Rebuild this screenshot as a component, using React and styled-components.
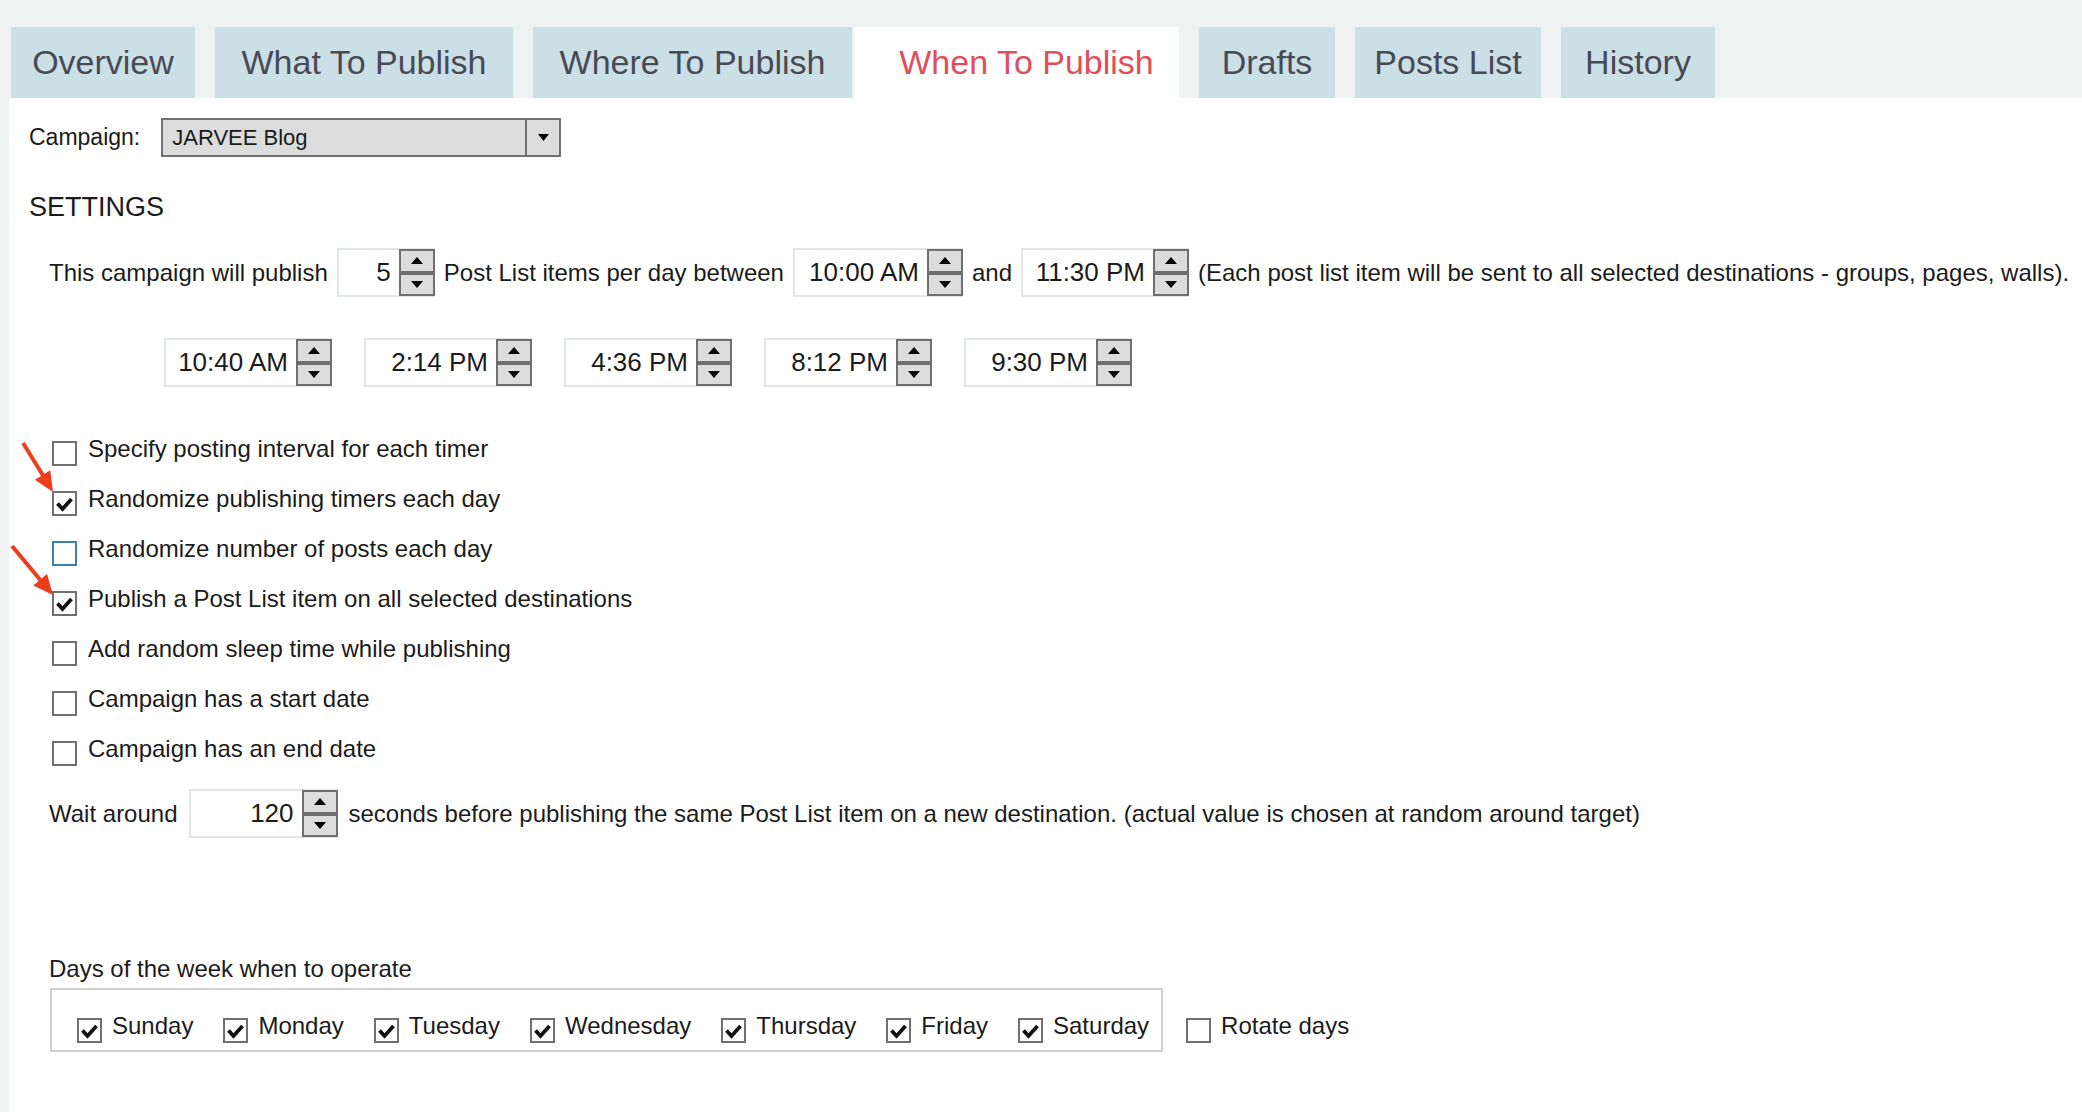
import React from "react";
import styled, { createGlobalStyle } from "styled-components";

const GlobalStyle = createGlobalStyle`
  html, body {
    margin: 0;
    padding: 0;
    background: #ffffff;
  }
  body {
    font-family: "Liberation Sans", Arial, sans-serif;
    color: #1b1b1b;
  }
`;

const Page = styled.div`
  position: relative;
  width: 2082px;
  min-height: 1112px;
  background: #ffffff;
  display: flex;
  flex-direction: column;
`;

const TabStrip = styled.div`
  display: flex;
  gap: 20px;
  height: 98px;
  box-sizing: border-box;
  padding: 27px 0 0 11px;
  background: #eef2f1;
`;

const Tab = styled.div`
  box-sizing: border-box;
  width: ${(p) => p.$w}px;
  height: 71px;
  display: flex;
  align-items: center;
  justify-content: center;
  font-size: 34px;
  color: ${(p) => (p.$active ? "#e24d5a" : "#4a4a55")};
  background: ${(p) => (p.$active ? "#ffffff" : "#cbdfe6")};
  margin-left: ${(p) => (p.$active ? "-18px" : "0")};
  padding-left: ${(p) => (p.$active ? "20px" : "0")};
`;

const Body = styled.div`
  flex: 1;
  border-left: 9px solid #eef2f1;
  padding: 20px 0 0 20px;
  display: flex;
  flex-direction: column;
`;

const CampaignRow = styled.div`
  display: flex;
  align-items: center;
  gap: 21px;
  font-size: 23px;
`;

const Combo = styled.div`
  box-sizing: border-box;
  width: 400px;
  height: 39px;
  display: flex;
  border: 2px solid #707070;
  background: #dcdcdc;
`;

const ComboText = styled.div`
  flex: 1;
  display: flex;
  align-items: center;
  padding-left: 9px;
  font-size: 22px;
  color: #1b1b1b;
`;

const ComboButton = styled.div`
  width: 32px;
  border-left: 2px solid #707070;
  display: flex;
  align-items: center;
  justify-content: center;
`;

const SectionTitle = styled.div`
  margin-top: 32px;
  font-size: 27px;
  line-height: 36px;
  color: #1b1b1b;
`;

const InlineRow = styled.div`
  display: flex;
  align-items: center;
  gap: ${(p) => p.$gap || 10}px;
  margin-top: ${(p) => p.$top}px;
  padding-left: ${(p) => p.$indent}px;
  font-size: 24px;
  white-space: nowrap;
`;

const SpinBox = styled.div`
  box-sizing: border-box;
  width: ${(p) => p.$w}px;
  height: 49px;
  display: flex;
  border: 2px solid #e1e6ea;
  border-right: none;
  background: #ffffff;
`;

const SpinValue = styled.div`
  flex: 1;
  display: flex;
  align-items: center;
  justify-content: flex-end;
  padding-right: 8px;
  font-size: 26px;
  color: #1b1b1b;
`;

const SpinButtons = styled.div`
  width: 36px;
  display: flex;
  flex-direction: column;
  margin-top: -1px;
  margin-bottom: -1px;
`;

const SpinButton = styled.div`
  flex: 1;
  box-sizing: border-box;
  border: 2px solid #6f6f6f;
  background: #dcdcdc;
  display: flex;
  align-items: center;
  justify-content: center;
`;

const CheckList = styled.div`
  margin-top: 37px;
  padding-left: 23px;
  display: flex;
  flex-direction: column;
`;

const CheckRow = styled.div`
  height: ${(p) => p.$h || 50}px;
  display: flex;
  align-items: center;
  gap: ${(p) => p.$gap || 11}px;
  font-size: 24px;
  white-space: nowrap;
`;

const Box = styled.div`
  box-sizing: border-box;
  flex: none;
  width: 25px;
  height: 25px;
  margin-top: 8px;
  border: 2px solid ${(p) => (p.$focus ? "#3d7fb3" : "#707070")};
  background: #ffffff;
  display: flex;
  align-items: center;
  justify-content: center;
`;

const DaysLabel = styled.div`
  margin-top: 117px;
  padding-left: 20px;
  font-size: 24px;
  line-height: 28px;
`;

const DaysRow = styled.div`
  margin-top: 5px;
  padding-left: 21px;
  display: flex;
  align-items: flex-end;
`;

const DaysGroup = styled.div`
  display: flex;
  gap: 30px;
  border: 2px solid #d0d0d0;
  padding: 18px 12px 6px 25px;
`;

const RotateWrap = styled.div`
  margin-left: 23px;
  padding-bottom: 8px;
`;

const Annotations = styled.svg`
  position: absolute;
  left: 0;
  top: 430px;
  width: 70px;
  height: 180px;
  pointer-events: none;
`;

const Arrow = ({ dir }) => (
  <svg width="12" height="7" viewBox="0 0 12 7">
    {dir === "up" ? (
      <polygon points="0,7 6,0 12,7" fill="#000" />
    ) : (
      <polygon points="0,0 12,0 6,7" fill="#000" />
    )}
  </svg>
);

const Spin = ({ value, w }) => (
  <SpinBox $w={w}>
    <SpinValue>{value}</SpinValue>
    <SpinButtons>
      <SpinButton>
        <Arrow dir="up" />
      </SpinButton>
      <SpinButton>
        <Arrow dir="down" />
      </SpinButton>
    </SpinButtons>
  </SpinBox>
);

const Check = ({ checked, focus, label, h, gap }) => (
  <CheckRow $h={h} $gap={gap}>
    <Box $focus={focus}>
      {checked && (
        <svg width="21" height="21" viewBox="0 0 21 21">
          <polyline
            points="3.5,10.5 8.5,16 17.5,6"
            fill="none"
            stroke="#111"
            strokeWidth="3.8"
          />
        </svg>
      )}
    </Box>
    <span>{label}</span>
  </CheckRow>
);

const tabs = [
  { name: "Overview", w: 184 },
  { name: "What To Publish", w: 298 },
  { name: "Where To Publish", w: 319 },
  { name: "When To Publish", w: 325, active: true },
  { name: "Drafts", w: 136 },
  { name: "Posts List", w: 186 },
  { name: "History", w: 154 },
];

const options = [
  { label: "Specify posting interval for each timer" },
  { label: "Randomize publishing timers each day", checked: true },
  { label: "Randomize number of posts each day", focus: true },
  { label: "Publish a Post List item on all selected destinations", checked: true },
  { label: "Add random sleep time while publishing" },
  { label: "Campaign has a start date" },
  { label: "Campaign has an end date" },
];

const timers = ["10:40 AM", "2:14 PM", "4:36 PM", "8:12 PM", "9:30 PM"];
const days = ["Sunday", "Monday", "Tuesday", "Wednesday", "Thursday", "Friday", "Saturday"];

const App = () => {
  return (
    <Page>
      <GlobalStyle />
      <TabStrip>
        {tabs.map((t) => (
          <Tab key={t.name} $w={t.w} $active={t.active}>
            {t.name}
          </Tab>
        ))}
      </TabStrip>
      <Body>
        <CampaignRow>
          <span>Campaign:</span>
          <Combo>
            <ComboText>JARVEE Blog</ComboText>
            <ComboButton>
              <svg width="11" height="7" viewBox="0 0 11 7">
                <polygon points="0,0 11,0 5.5,7" fill="#000" />
              </svg>
            </ComboButton>
          </Combo>
        </CampaignRow>

        <SectionTitle>SETTINGS</SectionTitle>

        <InlineRow $top={23} $indent={20} $gap={9}>
          <span>This campaign will publish</span>
          <Spin value="5" w={98} />
          <span>Post List items per day between</span>
          <Spin value="10:00 AM" w={170} />
          <span>and</span>
          <Spin value="11:30 PM" w={168} />
          <span>(Each post list item will be sent to all selected destinations - groups, pages, walls).</span>
        </InlineRow>

        <InlineRow $top={41} $indent={135} $gap={32}>
          {timers.map((t) => (
            <Spin key={t} value={t} w={168} />
          ))}
        </InlineRow>

        <CheckList>
          {options.map((o) => (
            <Check key={o.label} {...o} />
          ))}
        </CheckList>

        <InlineRow $top={15} $indent={20} $gap={11}>
          <span>Wait around</span>
          <Spin value="120" w={149} />
          <span>
            seconds before publishing the same Post List item on a new destination. (actual value is chosen at random around target)
          </span>
        </InlineRow>

        <DaysLabel>Days of the week when to operate</DaysLabel>
        <DaysRow>
          <DaysGroup>
            {days.map((d) => (
              <Check key={d} label={d} checked h={36} gap={10} />
            ))}
          </DaysGroup>
          <RotateWrap>
            <Check label="Rotate days" h={36} gap={10} />
          </RotateWrap>
        </DaysRow>
      </Body>

      <Annotations viewBox="0 0 70 180">
        <line x1="23" y1="13" x2="44" y2="47" stroke="#ee3d1c" strokeWidth="4" />
        <polygon points="53,62 34.9,49.7 50.2,40.3" fill="#ee3d1c" />
        <line x1="12" y1="116" x2="42" y2="152" stroke="#ee3d1c" strokeWidth="4" />
        <polygon points="53,165 33.3,155.5 47.1,143.9" fill="#ee3d1c" />
      </Annotations>
    </Page>
  );
};

export default App;
